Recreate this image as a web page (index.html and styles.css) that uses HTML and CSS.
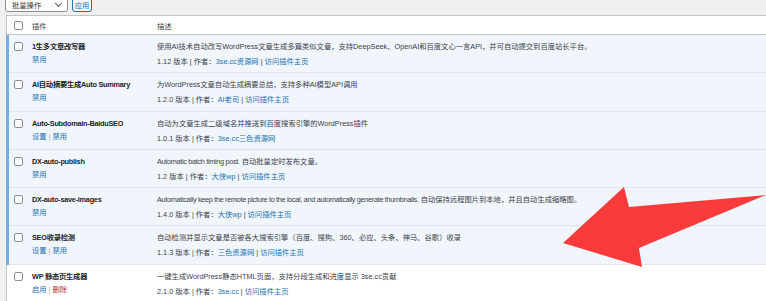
FILE: index.html
```html
<!DOCTYPE html>
<html lang="zh">
<head>
<meta charset="utf-8">
<link rel="stylesheet" href="styles.css">
</head>
<body>
<div class="topbar">
  <div class="select"><span>批量操作</span><span class="chev"></span></div>
  <div class="apply">应用</div>
</div>
<div class="table">
  <div class="row head">
    <div class="cb"><span class="box"></span></div>
    <div class="name">插件</div>
    <div class="desc">描述</div>
  </div>

  <div class="row active">
    <div class="cb"><span class="box"></span></div>
    <div class="name"><div class="title">1生多文章改写器</div><div class="links"><a>禁用</a></div></div>
    <div class="desc"><div class="text">使用AI技术自动改写WordPress文章生成多篇类似文章，支持DeepSeek、OpenAI和百度文心一言API，并可自动提交到百度站长平台。</div><div class="meta">1.12 版本 | 作者：<a>3se.cc资源网</a> | <a>访问插件主页</a></div></div>
  </div>

  <div class="row active">
    <div class="cb"><span class="box"></span></div>
    <div class="name"><div class="title">AI自动摘要生成Auto Summary</div><div class="links"><a>禁用</a></div></div>
    <div class="desc"><div class="text">为WordPress文章自动生成摘要总结，支持多种AI模型API调用</div><div class="meta">1.2.0 版本 | 作者：<a>AI老司</a> | <a>访问插件主页</a></div></div>
  </div>

  <div class="row active">
    <div class="cb"><span class="box"></span></div>
    <div class="name"><div class="title">Auto-Subdomain-BaiduSEO</div><div class="links"><a>设置</a> | <a>禁用</a></div></div>
    <div class="desc"><div class="text">自动为文章生成二级域名并推送到百度搜索引擎的WordPress插件</div><div class="meta">1.0.1 版本 | 作者：<a>3se.cc三色资源网</a></div></div>
  </div>

  <div class="row active">
    <div class="cb"><span class="box"></span></div>
    <div class="name"><div class="title">DX-auto-publish</div><div class="links"><a>禁用</a></div></div>
    <div class="desc"><div class="text"><span class="en">Automatic batch timing post.</span> 自动批量定时发布文章。</div><div class="meta">1.2 版本 | 作者：<a>大侠wp</a> | <a>访问插件主页</a></div></div>
  </div>

  <div class="row active">
    <div class="cb"><span class="box"></span></div>
    <div class="name"><div class="title">DX-auto-save-images</div><div class="links"><a>禁用</a></div></div>
    <div class="desc"><div class="text"><span class="en">Automatically keep the remote picture to the local, and automatically generate thumbnails.</span> 自动保持远程图片到本地，并且自动生成缩略图。</div><div class="meta">1.4.0 版本 | 作者：<a>大侠wp</a> | <a>访问插件主页</a></div></div>
  </div>

  <div class="row active">
    <div class="cb"><span class="box"></span></div>
    <div class="name"><div class="title">SEO收录检测</div><div class="links"><a>设置</a> | <a>禁用</a></div></div>
    <div class="desc"><div class="text">自动检测并显示文章是否被各大搜索引擎（百度、搜狗、360、必应、头条、神马、谷歌）收录</div><div class="meta">1.1.3 版本 | 作者：<a>三色资源网</a> | <a>访问插件主页</a></div></div>
  </div>

  <div class="row">
    <div class="cb"><span class="box"></span></div>
    <div class="name"><div class="title">WP 静态页生成器</div><div class="links"><a>启用</a> | <a class="del">删除</a></div></div>
    <div class="desc"><div class="text">一键生成WordPress静态HTML页面，支持分段生成和进度显示 3se.cc贡献</div><div class="meta">2.1.0 版本 | 作者：<a>3se.cc</a> | <a>访问插件主页</a></div></div>
  </div>
</div>

<svg class="arrow" width="766" height="301" viewBox="0 0 766 301">
  <polygon points="563,243 624,187 629,207 766,195 639,248 642,267" fill="#f93b3c"/>
</svg>
</body>
</html>
```

FILE: styles.css
```css
* { box-sizing: border-box; }
html, body { margin: 0; padding: 0; }
body {
  width: 766px;
  height: 301px;
  overflow: hidden;
  background: #f0f0f1;
  font-family: "Liberation Sans", "Noto Sans CJK SC", sans-serif;
  font-size: 7.3px;
  color: #3c434a;
  position: relative;
}
a { color: #2271b1; text-decoration: none; }
a.del { color: #b32d2e; }
.en { letter-spacing: -0.32px; }

.topbar {
  height: 15px;
  display: flex;
  align-items: flex-start;
  padding-left: 5px;
}
.select {
  width: 63px;
  height: 17px;
  margin-top: -5px;
  background: #fff;
  border: 1px solid #8c8f94;
  border-radius: 3px;
  display: flex;
  align-items: center;
  justify-content: space-between;
  padding: 3px 6px 0 6px;
  color: #2c3338;
}
.chev {
  width: 5px;
  height: 5px;
  border-right: 1px solid #50575e;
  border-bottom: 1px solid #50575e;
  transform: rotate(45deg);
  margin-top: -3px;
}
.apply {
  margin-left: 4px;
  width: 20px;
  height: 17px;
  margin-top: -5px;
  background: #f6f7f7;
  border: 1px solid #2271b1;
  border-radius: 3px;
  color: #2271b1;
  display: flex;
  align-items: center;
  justify-content: center;
  padding-top: 3px;
}

.table {
  margin-left: 6px;
  background: #fff;
  border-top: 1px solid #c3c4c7;
  border-left: 1px solid #c3c4c7;
}
.row {
  display: flex;
  height: 38.3px;
  box-shadow: inset 0 -1px 0 #e2e4e7;
}
.row.head {
  height: 19px;
  align-items: center;
  box-shadow: inset 0 -1px 0 #c3c4c7;
  color: #3c434a;
}
.row.active {
  background: #f0f6fc;
  border-left: 3px solid #72aee6;
  margin-left: -1px;
}
.cb {
  width: 25px;
  flex: none;
  padding-left: 7px;
}
.row.active .cb { width: 23px; padding-left: 5px; }
.row:not(.head) .cb { padding-top: 7px; }
.box {
  display: block;
  width: 9px;
  height: 9px;
  border: 1px solid #8c8f94;
  border-radius: 2px;
  background: #fff;
}
.name {
  width: 125px;
  flex: none;
}
.row:not(.head) .name { padding-top: 6px; }
.title {
  font-weight: bold;
  color: #1d2327;
  line-height: 11px;
  white-space: nowrap;
  letter-spacing: -0.25px;
}
.links {
  margin-top: 2px;
  line-height: 11px;
  color: #a7aaad;
}
.desc {
  flex: 1;
  white-space: nowrap;
}
.row:not(.head) .desc { padding-top: 6px; }
.text {
  line-height: 11px;
  color: #3c434a;
}
.meta {
  margin-top: 4px;
  line-height: 11px;
  color: #3c434a;
}

.arrow {
  position: absolute;
  left: 0;
  top: 0;
  pointer-events: none;
}
```
